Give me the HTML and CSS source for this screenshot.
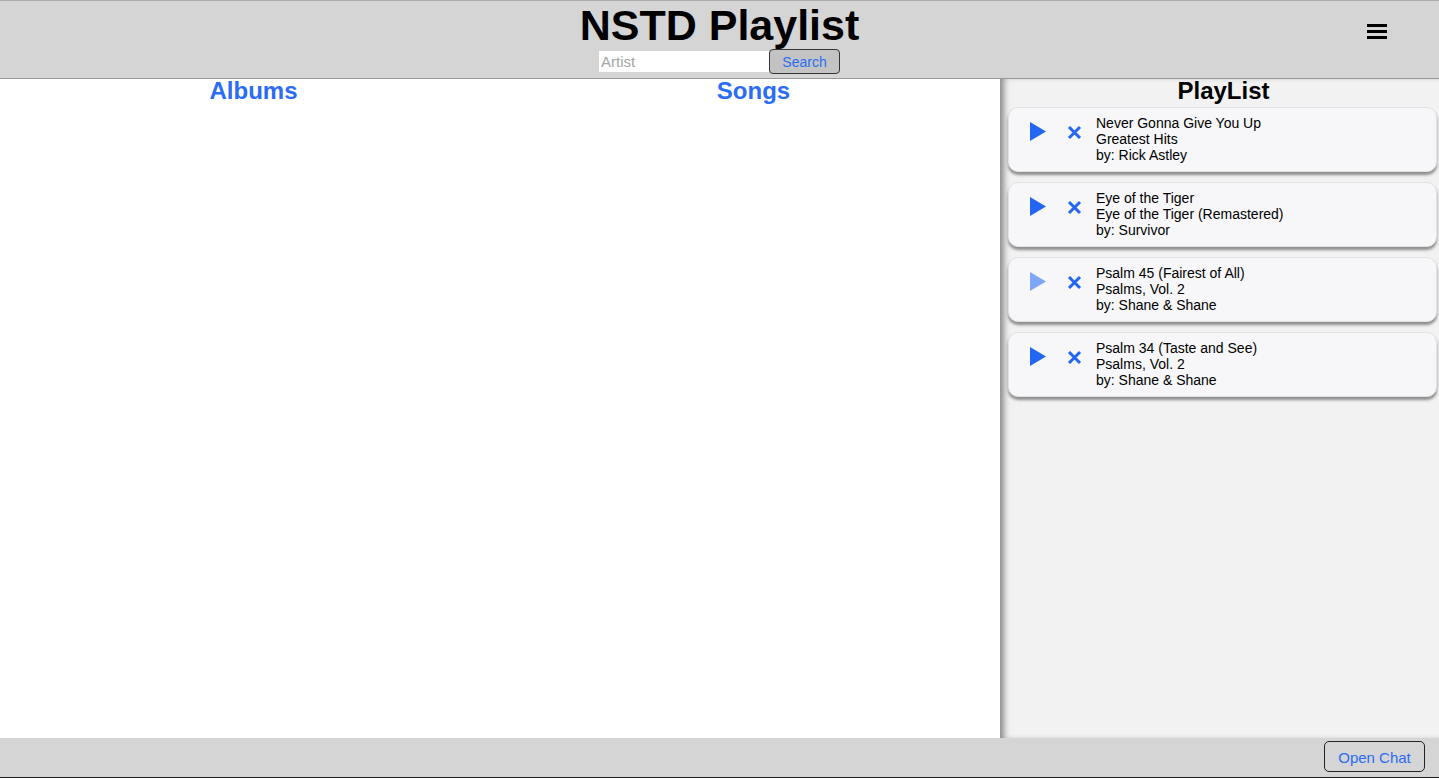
FILE: index.html
```html
<!DOCTYPE html>
<html>
<head>
<meta charset="utf-8">
<title>NSTD Playlist</title>
<link rel="stylesheet" href="styles.css">
</head>
<body>
<div class="app">
  <header class="header">
    <h1 class="title">NSTD Playlist</h1>
    <form class="search" onsubmit="return false">
      <input class="search-input" type="text" placeholder="Artist">
      <button class="search-btn" type="button">Search</button>
    </form>
    <button class="menu" type="button" aria-label="Menu">
      <span class="menu-bar"></span><span class="menu-bar"></span><span class="menu-bar"></span>
    </button>
  </header>
  <main class="main">
    <section class="browse">
      <div class="col"><h2 class="col-title">Albums</h2></div>
      <div class="col"><h2 class="col-title">Songs</h2></div>
    </section>
    <aside class="playlist">
      <h2 class="pl-title">PlayList</h2>
      <div class="card">
        <div class="controls">
          <svg class="play" width="16" height="19" viewBox="0 0 16 19"><path d="M0 0 L16 9.5 L0 19 Z"/></svg>
          <svg class="remove" width="15" height="15" viewBox="0 0 15 15"><path d="M2 2 L13 13 M13 2 L2 13"/></svg>
        </div>
        <div class="info">
          <div>Never Gonna Give You Up</div>
          <div>Greatest Hits</div>
          <div>by: Rick Astley</div>
        </div>
      </div>
      <div class="card">
        <div class="controls">
          <svg class="play" width="16" height="19" viewBox="0 0 16 19"><path d="M0 0 L16 9.5 L0 19 Z"/></svg>
          <svg class="remove" width="15" height="15" viewBox="0 0 15 15"><path d="M2 2 L13 13 M13 2 L2 13"/></svg>
        </div>
        <div class="info">
          <div>Eye of the Tiger</div>
          <div>Eye of the Tiger (Remastered)</div>
          <div>by: Survivor</div>
        </div>
      </div>
      <div class="card">
        <div class="controls">
          <svg class="play play-dim" width="16" height="19" viewBox="0 0 16 19"><path d="M0 0 L16 9.5 L0 19 Z"/></svg>
          <svg class="remove" width="15" height="15" viewBox="0 0 15 15"><path d="M2 2 L13 13 M13 2 L2 13"/></svg>
        </div>
        <div class="info">
          <div>Psalm 45 (Fairest of All)</div>
          <div>Psalms, Vol. 2</div>
          <div>by: Shane &amp; Shane</div>
        </div>
      </div>
      <div class="card">
        <div class="controls">
          <svg class="play" width="16" height="19" viewBox="0 0 16 19"><path d="M0 0 L16 9.5 L0 19 Z"/></svg>
          <svg class="remove" width="15" height="15" viewBox="0 0 15 15"><path d="M2 2 L13 13 M13 2 L2 13"/></svg>
        </div>
        <div class="info">
          <div>Psalm 34 (Taste and See)</div>
          <div>Psalms, Vol. 2</div>
          <div>by: Shane &amp; Shane</div>
        </div>
      </div>
    </aside>
  </main>
  <footer class="footer">
    <button class="chat-btn" type="button">Open Chat</button>
  </footer>
</div>
</body>
</html>
```

FILE: styles.css
```css
* { box-sizing: border-box; }
html, body { margin: 0; padding: 0; }
body {
  font-family: "Liberation Sans", Arial, Helvetica, sans-serif;
  color: #000;
  background: #fff;
  overflow: hidden;
}
.app {
  display: flex;
  flex-direction: column;
  height: 778px;
}
.header {
  position: relative;
  height: 79px;
  background: #d5d5d5;
  border-top: 1px solid #ababab;
  border-bottom: 1px solid #999;
  display: flex;
  flex-direction: column;
  align-items: center;
}
.title {
  margin: 0 0 -2px;
  font-size: 43px;
  font-weight: bold;
  line-height: 49px;
}
.search {
  display: flex;
  align-items: center;
  margin: 0;
  height: 26px;
}
.search-input {
  width: 170px;
  height: 21px;
  border: none;
  outline: none;
  background: #fff;
  padding: 0 2px;
  font-family: "Liberation Sans", Arial, sans-serif;
  font-size: 15px;
  color: #000;
}
.search-input::placeholder { color: #a5a5a5; }
.search-btn {
  width: 71px;
  height: 25px;
  background: #c3c3c3;
  border: 1px solid #333;
  border-radius: 4px;
  color: #2b6cf5;
  font-family: "Liberation Sans", Arial, sans-serif;
  font-size: 14px;
  padding: 2px 0 0;
}
.menu {
  position: absolute;
  right: 52px;
  top: 23px;
  width: 20px;
  padding: 0;
  border: none;
  background: none;
  display: flex;
  flex-direction: column;
  gap: 3px;
}
.menu-bar {
  display: block;
  height: 3px;
  width: 20px;
  background: #000;
}
.main {
  flex: 1;
  display: flex;
  min-height: 0;
}
.browse {
  width: 1000px;
  display: grid;
  grid-template-columns: 507px 493px;
  background: #fff;
}
.col-title {
  margin: 0;
  text-align: center;
  font-size: 24px;
  line-height: 24px;
  font-weight: bold;
  color: #2b6cf5;
}
.playlist {
  flex: 1;
  background: #f2f2f2;
  box-shadow: inset 7px 0 6px -3px #8a8a8a;
  padding: 0 2px 0 8px;
}
.pl-title {
  margin: 0 0 4px;
  text-align: center;
  font-size: 24px;
  line-height: 24px;
  font-weight: bold;
  padding-left: 2px;
}
.card {
  display: flex;
  align-items: flex-start;
  height: 65px;
  margin-bottom: 10px;
  background: #f7f7f9;
  border: 1px solid #e2e2e4;
  border-radius: 10px;
  box-shadow: 0 3px 3px #8c8c8c;
  padding: 0 0 1px 21px;
}
.controls {
  display: flex;
  align-items: center;
  width: 66px;
  gap: 21px;
  margin-top: 14px;
}
.play { fill: #2366f4; display: block; }
.play-dim { fill: #7ea7f7; }
.remove {
  stroke: #2366f4;
  stroke-width: 3;
  stroke-linecap: butt;
  fill: none;
  display: block;
  margin-top: 1px;
}
.info {
  font-size: 14px;
  line-height: 16px;
  color: #000;
  margin-top: 7px;
}
.footer {
  height: 40px;
  background: #d5d5d5;
  border-bottom: 1px solid #222;
  display: flex;
  justify-content: flex-end;
  align-items: flex-start;
  padding: 3px 14px 0 0;
}
.chat-btn {
  width: 101px;
  height: 31px;
  background: transparent;
  border: 1px solid #222;
  border-radius: 5px;
  color: #2b6cf5;
  font-family: "Liberation Sans", Arial, sans-serif;
  font-size: 15px;
  padding: 2px 0 0;
}
```
